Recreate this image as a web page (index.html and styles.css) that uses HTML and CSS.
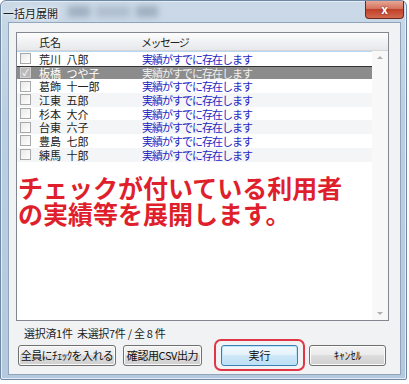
FILE: index.html
```html
<!DOCTYPE html>
<html lang="ja">
<head>
    <meta charset="UTF-8">
    <title>一括月展開</title>
    <link rel="stylesheet" href="styles.css">
</head>
<body>
    <div class="window">
        <div class="titlebar">
            <span class="title">一括月展開</span>
            <span class="glass"><i></i><i></i><i></i></span>
            <span class="close">x</span>
        </div>
        <div class="client">
            <div class="list">
                <div class="list-head">
                    <span class="col-name">氏名</span>
                    <span class="col-msg">メッセージ</span>
                </div>
                <div class="list-main">
                    <div class="rows">
                        <div class="row"><span class="chk"></span><span class="name">荒川 八郎</span><span class="msg">実績がすでに存在します</span></div>
                        <div class="row sel"><span class="chk on">✓</span><span class="name">板橋 つや子</span><span class="msg">実績がすでに存在します</span></div>
                        <div class="row"><span class="chk"></span><span class="name">葛飾 十一郎</span><span class="msg">実績がすでに存在します</span></div>
                        <div class="row alt"><span class="chk"></span><span class="name">江東 五郎</span><span class="msg">実績がすでに存在します</span></div>
                        <div class="row"><span class="chk"></span><span class="name">杉本 大介</span><span class="msg">実績がすでに存在します</span></div>
                        <div class="row alt"><span class="chk"></span><span class="name">台東 六子</span><span class="msg">実績がすでに存在します</span></div>
                        <div class="row"><span class="chk"></span><span class="name">豊島 七郎</span><span class="msg">実績がすでに存在します</span></div>
                        <div class="row alt"><span class="chk"></span><span class="name">練馬 十郎</span><span class="msg">実績がすでに存在します</span></div>
                        <p class="note">チェックが付いている利用者<br>の実績等を展開します。</p>
                    </div>
                    <div class="scroll">
                        <span class="arrow up"></span>
                        <span class="arrow down"></span>
                    </div>
                </div>
            </div>
            <div class="status">選択済1件&nbsp; 未選択7件 / 全 8 件</div>
            <div class="buttons">
                <span class="btn w1">全員にﾁｪｯｸを入れる</span>
                <span class="btn w2">確認用CSV出力</span>
                <span class="mark">
                    <span class="btn w3 default">実行</span>
                    <span class="ring"></span>
                </span>
                <span class="btn w4">ｷｬﾝｾﾙ</span>
            </div>
        </div>
    </div>
</body>
</html>
```

FILE: styles.css
```css
* {
    margin: 0;
    padding: 0;
    box-sizing: border-box;
}
body {
    background: #fff;
    font-family: "Noto Sans CJK JP", "Noto Sans", sans-serif;
    font-size: 11px;
    color: #222;
}
.window {
    width: 407px;
    height: 380px;
    padding: 0 5px 4px 7px;
    background: linear-gradient(#cbd9e7, #bccfe2 30%, #b5c9de);
    border: 1px solid #6f88a4;
    border-radius: 6px 6px 2px 2px;
    box-shadow: inset 0 0 0 1px #e4edf6;
    display: flex;
    flex-direction: column;
}
.titlebar {
    height: 21px;
    display: flex;
    align-items: center;
    position: relative;
    margin-left: -5px;
}
.title {
    font-size: 11px;
    line-height: 14px;
    color: #1b1b1b;
    text-shadow: 0 0 6px #fff, 0 0 3px #fff;
    padding-top: 2px;
}
.glass {
    display: flex;
    gap: 6px;
    margin-left: 10px;
    filter: blur(3px);
    opacity: .55;
}
.glass i {
    display: block;
    width: 22px;
    height: 11px;
    background: #7d8fa3;
}
.glass i:nth-child(2) {
    width: 34px;
    background: #9aa9ba;
}
.close {
    position: absolute;
    right: -3px;
    top: 0;
    width: 39px;
    height: 18px;
    border: 1px solid #6b2a20;
    border-top: none;
    border-radius: 0 0 4px 4px;
    background: linear-gradient(#e8a595, #d4735f 45%, #c0402a 50%, #d2694d);
    color: #fff;
    font-size: 12px;
    font-weight: bold;
    line-height: 15px;
    text-align: center;
    text-shadow: 0 0 2px #6b1a10;
}
.client {
    flex: 1;
    background: #f1f2f3;
    border: 1px solid #8fa4bb;
    padding: 9px 13px 0 7px;
}
.list {
    width: 373px;
    height: 289px;
    border: 1px solid #828790;
    background: #fff;
    display: flex;
    flex-direction: column;
}
.list-head {
    height: 18px;
    display: flex;
    align-items: center;
    background: linear-gradient(#fdfdfd, #f1f2f4 50%, #e6e8eb);
    border-bottom: 1px solid #d5d5d5;
    font-size: 11px;
    line-height: 14px;
}
.col-name {
    width: 124px;
    padding-left: 22px;
}
.col-msg {
    letter-spacing: -1.5px;
}
.list-main {
    flex: 1;
    display: flex;
    min-height: 0;
}
.rows {
    flex: 1;
    border-top: 1px solid #b8d8f2;
}
.row {
    height: 13.7px;
    display: flex;
    align-items: center;
    font-size: 11px;
    line-height: 12px;
    overflow: hidden;
}
.row.alt {
    background: #f4f5f6;
}
.row.sel {
    background: #8c8c8c;
    color: #fff;
    box-shadow: inset 0 1px 0 #333;
}
.chk {
    width: 11px;
    height: 11px;
    margin: 0 8px 0 3px;
    border: 1px solid #a8a8a8;
    background: linear-gradient(135deg, #e9e9e9, #fff);
    font-size: 9px;
    line-height: 9px;
    text-align: center;
    color: #555;
}
.chk.on {
    background: #b9b9b9;
    border-color: #cfcfcf;
    color: #fff;
}
.name {
    width: 103px;
    word-spacing: 3px;
}
.msg {
    color: #2626c2;
    letter-spacing: -1px;
}
.sel .msg {
    color: #f0f0f0;
}
.note {
    margin-top: 12px;
    padding-left: 1px;
    font-size: 25px;
    line-height: 26px;
    font-weight: bold;
    color: #e01f2d;
}
.scroll {
    width: 16px;
    background: #f8f8f8;
    display: flex;
    flex-direction: column;
    justify-content: space-between;
    align-items: center;
    padding: 5px 0 5px;
}
.arrow {
    width: 0;
    height: 0;
    border-left: 3px solid transparent;
    border-right: 3px solid transparent;
}
.arrow.up {
    border-bottom: 3px solid #b0b0b0;
}
.arrow.down {
    border-top: 3px solid #b0b0b0;
}
.status {
    margin: 6px 0 0 8px;
    height: 13px;
    line-height: 13px;
    font-size: 11px;
    letter-spacing: -0.3px;
}
.buttons {
    display: flex;
    margin: 5px 0 0 2px;
}
.btn {
    display: block;
    height: 21px;
    border: 1px solid #707070;
    border-radius: 3px;
    background: linear-gradient(#f3f3f3, #ebebeb 50%, #dddddd 50%, #cfcfcf);
    box-shadow: inset 0 0 0 1px #fbfbfb;
    text-align: center;
    line-height: 19px;
    font-size: 11px;
    color: #111;
    white-space: nowrap;
    overflow: hidden;
}
.w1 { width: 98px; letter-spacing: -0.6px; }
.w2 { width: 79px; margin-left: 7px; letter-spacing: -0.4px; }
.w3 { width: 77px; }
.w4 { width: 77px; margin-left: 11px; }
.btn.default {
    border-color: #3c7fb1;
    background: linear-gradient(#f0f8fd, #e4f2fb 50%, #cfe8f8 50%, #bcdff5);
    box-shadow: inset 0 0 0 1px #bde4fb;
}
.mark {
    position: relative;
    margin-left: 19px;
}
.ring {
    position: absolute;
    left: -7px;
    right: -7px;
    top: -6px;
    bottom: -5px;
    border: 2px solid #e03545;
    border-radius: 7px;
}
```
